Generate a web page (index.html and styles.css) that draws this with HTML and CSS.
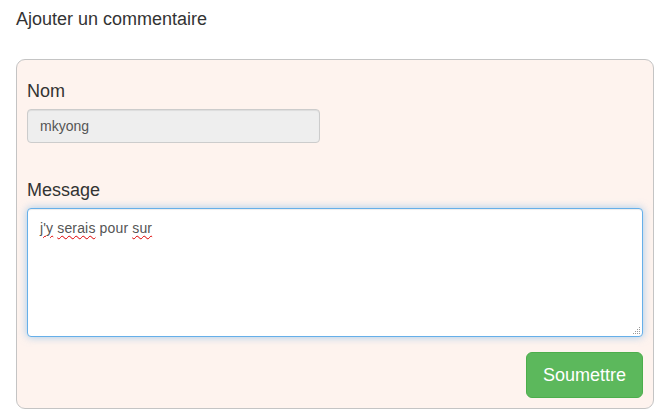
FILE: index.html
```html
<!DOCTYPE html>
<html lang="fr">
<head>
<meta charset="utf-8">
<title>Ajouter un commentaire</title>
<link rel="stylesheet" href="styles.css">
</head>
<body>
<div class="page">
  <h3 class="title">Ajouter un commentaire</h3>
  <form class="panel">
    <div class="group">
      <label class="label">Nom</label>
      <div class="input">mkyong</div>
    </div>
    <div class="group group-msg">
      <label class="label">Message</label>
      <div class="textarea">
        <span class="typo">j'y</span> <span class="typo">serais</span> pour <span class="typo">sur</span>
        <svg class="grip" width="9" height="9" viewBox="0 0 9 9">
          <g fill="#9a9a9a">
            <rect x="7" y="1" width="1" height="1"/>
            <rect x="5" y="3" width="1" height="1"/><rect x="7" y="3" width="1" height="1"/>
            <rect x="3" y="5" width="1" height="1"/><rect x="5" y="5" width="1" height="1"/><rect x="7" y="5" width="1" height="1"/>
            <rect x="1" y="7" width="1" height="1"/><rect x="3" y="7" width="1" height="1"/><rect x="5" y="7" width="1" height="1"/><rect x="7" y="7" width="1" height="1"/>
          </g>
        </svg>
      </div>
    </div>
    <div class="actions">
      <button type="button" class="btn">Soumettre</button>
    </div>
  </form>
</div>
</body>
</html>
```
FILE: styles.css
```css
* { box-sizing: border-box; }
html, body { margin: 0; padding: 0; background: #fff; }
body {
  font-family: "Liberation Sans", Arial, sans-serif;
  color: #333;
  font-size: 14px;
  line-height: 1.42857;
}
.page {
  padding: 9px 5px 0 16px;
}
.title {
  margin: 0 0 30px 0;
  font-size: 18px;
  font-weight: normal;
  line-height: 20px;
}
.panel {
  margin: 0;
  background: #fef3ee;
  border: 1px solid #c4c4c4;
  border-radius: 9px;
  padding: 19px 10px 10px 10px;
  height: 350px;
}
.group { display: flex; flex-direction: column; align-items: flex-start; }
.group-msg { margin-top: 35px; align-items: stretch; }
.label {
  display: block;
  font-size: 18px;
  line-height: 25px;
  margin-bottom: 5px;
}
.input {
  width: 293px;
  height: 34px;
  padding: 6px 12px;
  background: #eee;
  border: 1px solid #ccc;
  border-radius: 4px;
  color: #555;
  font-size: 14px;
  line-height: 20px;
  box-shadow: inset 0 1px 1px rgba(0,0,0,.075);
}
.textarea {
  position: relative;
  height: 129px;
  padding: 9px 11px 9px 12px;
  background: #fff;
  border: 1px solid #66afe9;
  border-radius: 4px;
  color: #555;
  font-size: 14px;
  line-height: 20px;
  letter-spacing: 0.15px;
  box-shadow: inset 0 1px 1px rgba(0,0,0,.075), 0 0 8px rgba(102,175,233,.6);
}
.typo {
  text-decoration: underline wavy #d00;
  text-decoration-thickness: 1px;
  text-underline-offset: 2px;
}
.grip {
  position: absolute;
  right: 1px;
  bottom: 1px;
}
.actions {
  display: flex;
  justify-content: flex-end;
  margin-top: 15px;
}
.btn {
  font-family: "Liberation Sans", Arial, sans-serif;
  font-size: 18px;
  line-height: 24px;
  padding: 10px 16px;
  height: 46px;
  color: #fff;
  background: #5cb85c;
  border: 1px solid #4cae4c;
  border-radius: 6px;
  cursor: pointer;
}
```
